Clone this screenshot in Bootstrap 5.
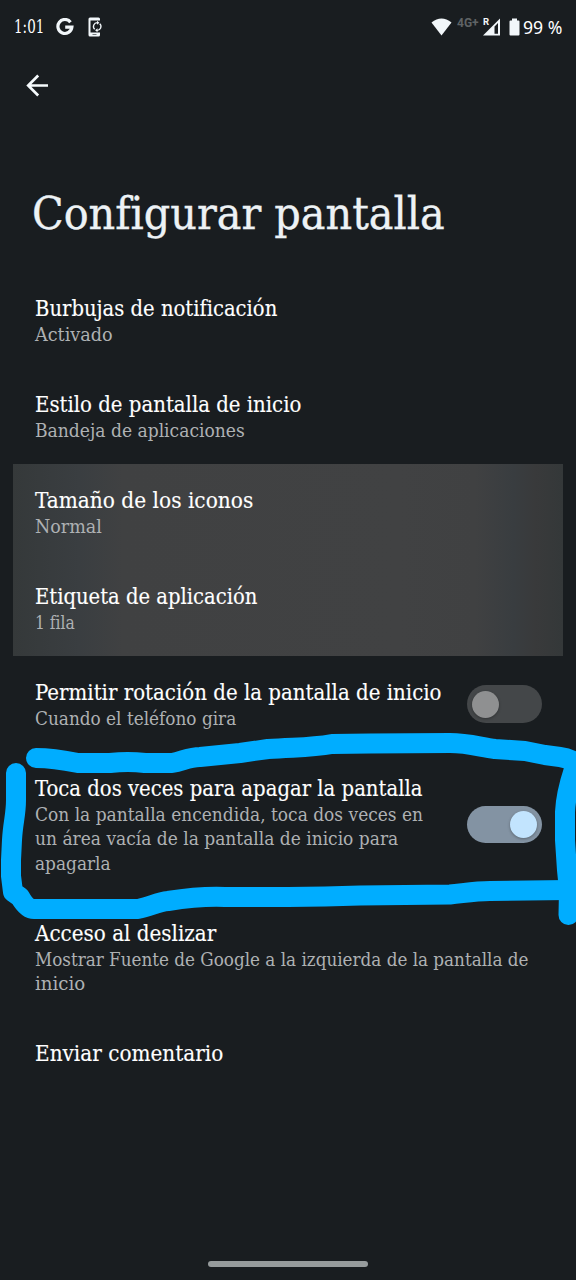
<!DOCTYPE html>
<html lang="es" data-bs-theme="dark">
<head>
<meta charset="utf-8">
<meta name="viewport" content="width=device-width, initial-scale=1">
<title>Configurar pantalla</title>
<link rel="stylesheet" href="https://cdn.jsdelivr.net/npm/bootstrap@5.3.0/dist/css/bootstrap.min.css">
<style>
  body { background: #191d20; color: #fff; font-family: "Roboto Slab", "DejaVu Serif Condensed", "DejaVu Serif", serif; font-stretch: condensed; }
  .screen { width: 576px; height: 1280px; overflow: hidden; }
  .status { height: 54px; padding: 0 14px; }
  .clock { width: 30px; font-size: 18.5px; line-height: 26px; }
  .google { margin-left: 12px; }
  .sync { margin-left: 14px; }
  .battery { font-family: "Noto Sans", sans-serif; font-stretch: normal; font-size: 18.5px; line-height: 26px; width: 39px; margin-left: 3px; }
  .net { font-family: Roboto, sans-serif; font-stretch: normal; font-weight: 700; font-size: 12px; line-height: 14px; color: #5f6365; width: 23px; margin: -8px 3px 0 5px; }
  .roam { font-family: Roboto, sans-serif; font-stretch: normal; font-weight: 700; font-size: 9.5px; }
  .toolbar { height: 62px; padding: 0 25px; }
  .heading { height: 156px; padding: 66px 0 0 32px; }
  .heading h1 { font-size: 45px; line-height: 64px; font-weight: 400; color: #edf2f5; -webkit-text-stroke: .35px; }
  .setting { padding: 23px 34px 20.6px 35px; min-height: 72px; }
  .setting-title { font-size: 21.7px; line-height: 28px; -webkit-text-stroke: .12px; }
  .setting-note { font-size: 18.6px; line-height: 24.4px; color: #aeb1b3; }
  .fit { display: inline-block; transform-origin: 0 50%; }
  .glow { margin: 0 13px; background: linear-gradient(90deg, #35393a 0, #3a3e41 12%, #404142 20%, #414243 70%, #404142 84%, #393d40 91%, #393a3b 95%, #343839 100%); }
  .glow .setting { padding-left: 22px; }
  .toggle { width: 75px; height: 38px; border-radius: 19px; background: #444749; padding: 0 5px; margin-top: -2px; }
  .toggle i { width: 27px; height: 27px; border-radius: 50%; background: #8f9091; box-shadow: 0 1px 3px rgba(0,0,0,.3); }
  .toggle.on { background: #8393a3; height: 37px; }
  .toggle.on i { background: #c2e4fe; }
  .marker { left: 0; top: 0; }
  .home-pill { width: 160px; height: 6px; background: #969b9c; bottom: 13px; left: 208px; }
</style>
</head>
<body>
<main class="screen position-relative">
  <header class="status d-flex align-items-center">
    <div class="clock text-nowrap"><span class="fit" data-w="30">1:01</span></div>
    <svg class="google" width="18" height="18" viewBox="0 0 18 18"><path d="M14.500 4.200A7 7 0 1 0 15.900 9.200H9.200" fill="none" stroke="#f2f7fa" stroke-width="3.200"/></svg>
    <svg class="sync" width="17" height="20" viewBox="0 0 17 20"><path fill="#f2f7fa" d="M2 .5h8.500a1.500 1.500 0 0 1 1.500 1.500V3.500H2.500V15.500H12V18a1.500 1.500 0 0 1-1.500 1.500H2A1.500 1.500 0 0 1 .5 18V2A1.500 1.500 0 0 1 2 .5z"/><path d="M6.700 12.300A3.800 3.800 0 0 1 9.500 5.700M11.700 6.700A3.800 3.800 0 0 1 9 13.300" fill="none" stroke="#f2f7fa" stroke-width="1.300"/><path fill="#f2f7fa" d="M9 3.700l2.400 2-2.400 2zM9.500 11.300v4L7.100 13.300z"/><path d="M4.500 17.500h4" stroke="#777d80"/></svg>
    <div class="ms-auto d-flex align-items-center">
      <svg width="21" height="18" viewBox="0 0 21 18"><path fill="#f2f7fa" d="M.5 4.500Q10.500-3.500 20.500 4.500L10.500 17.500z"/></svg>
      <div class="net text-nowrap"><span class="fit" data-w="22">4G+</span></div>
      <svg width="18" height="20" viewBox="0 0 18 20"><text class="roam" x="0" y="8" fill="#f2f7fa">R</text><path fill="#f2f7fa" fill-rule="evenodd" d="M0 18.500L17 1.500v17zM11.500 9.500V16.700H15V6z"/></svg>
      <svg class="ms-2" width="11" height="18" viewBox="0 0 11 18"><path fill="#f2f7fa" d="M3 .5h5v2h1.500a1 1 0 0 1 1 1v13a1 1 0 0 1-1 1h-8a1 1 0 0 1-1-1v-13a1 1 0 0 1 1-1H3z"/></svg>
      <div class="battery text-nowrap"><span class="fit" data-w="39">99 %</span></div>
    </div>
  </header>

  <nav class="toolbar d-flex align-items-center">
    <svg width="25" height="24" viewBox="0 0 25 24"><path d="M23 12.500H4M13.200 2.500L3.200 12.500l10 10" fill="none" stroke="#f5fafc" stroke-width="2.700"/></svg>
  </nav>

  <div class="heading text-nowrap"><h1 class="m-0"><span class="fit" data-w="413">Configurar pantalla</span></h1></div>

  <section>
    <div class="setting">
      <div class="setting-title text-nowrap"><span class="fit" data-w="242">Burbujas de notificación</span></div>
      <div class="setting-note text-nowrap"><span class="fit" data-w="78">Activado</span></div>
    </div>
    <div class="setting">
      <div class="setting-title text-nowrap"><span class="fit" data-w="266">Estilo de pantalla de inicio</span></div>
      <div class="setting-note text-nowrap"><span class="fit" data-w="210">Bandeja de aplicaciones</span></div>
    </div>
    <div class="glow">
      <div class="setting">
        <div class="setting-title text-nowrap"><span class="fit" data-w="218">Tamaño de los iconos</span></div>
        <div class="setting-note text-nowrap"><span class="fit" data-w="67">Normal</span></div>
      </div>
      <div class="setting">
        <div class="setting-title text-nowrap"><span class="fit" data-w="222">Etiqueta de aplicación</span></div>
        <div class="setting-note text-nowrap"><span class="fit" data-w="40">1 fila</span></div>
      </div>
    </div>
    <div class="setting d-flex align-items-center justify-content-between">
      <div class="flex-grow-1">
        <div class="setting-title text-nowrap"><span class="fit" data-w="406">Permitir rotación de la pantalla de inicio</span></div>
        <div class="setting-note text-nowrap"><span class="fit" data-w="201">Cuando el teléfono gira</span></div>
      </div>
      <div class="toggle d-flex align-items-center flex-shrink-0" role="switch" aria-checked="false"><i></i></div>
    </div>
    <div class="setting d-flex align-items-center justify-content-between">
      <div class="flex-grow-1">
        <div class="setting-title text-nowrap"><span class="fit" data-w="387">Toca dos veces para apagar la pantalla</span></div>
        <div class="setting-note text-nowrap"><span class="fit" data-w="388">Con la pantalla encendida, toca dos veces en</span><br><span class="fit" data-w="363">un área vacía de la pantalla de inicio para</span><br><span class="fit" data-w="76">apagarla</span></div>
      </div>
      <div class="toggle on d-flex align-items-center justify-content-end flex-shrink-0" role="switch" aria-checked="true"><i></i></div>
    </div>
    <div class="setting">
      <div class="setting-title text-nowrap"><span class="fit" data-w="181">Acceso al deslizar</span></div>
      <div class="setting-note text-nowrap"><span class="fit" data-w="493">Mostrar Fuente de Google a la izquierda de la pantalla de</span><br><span class="fit" data-w="50">inicio</span></div>
    </div>
    <div class="setting">
      <div class="setting-title text-nowrap"><span class="fit" data-w="188">Enviar comentario</span></div>
    </div>
  </section>

  <!-- Hand-drawn highlight around the double-tap setting -->
  <svg class="marker position-absolute pe-none" width="576" height="1280" viewBox="0 0 576 1280" fill="none" stroke="#00adff" stroke-width="20" stroke-linecap="round" stroke-linejoin="round">
    <path d="M36 758C52 758 63 760 78 763H110Q128 761 145 763H172C183 761 189 757 200 757L240 753 268 749C295 747 310 748 332 744L370 743.500 450 743C468 743 480 747 495 749L525 751 545 755 560 757Q569 758 576 763C572 776 566 790 565 812V840L567 870 569 890 568.500 915"/>
    <path d="M16 773V800C16 815 13 822 12 840L11 860V876L13 892 20 897C24 904 28 909 34 909H138C150 907 157 902 168 901Q200 896 225 897H288L325 896.500 360 895.500 450 894.500C465 893 475 891 490 891L568 890"/>
  </svg>
  <div class="home-pill position-absolute rounded-pill"></div>
</main>
<script src="https://cdn.jsdelivr.net/npm/bootstrap@5.3.0/dist/js/bootstrap.bundle.min.js"></script>
<script>
  // Condense each line of text to its set measure.
  document.querySelectorAll('.fit').forEach(function (el) {
    el.style.transform = 'scaleX(' + (el.dataset.w / el.offsetWidth) + ')';
  });
</script>
</body>
</html>
